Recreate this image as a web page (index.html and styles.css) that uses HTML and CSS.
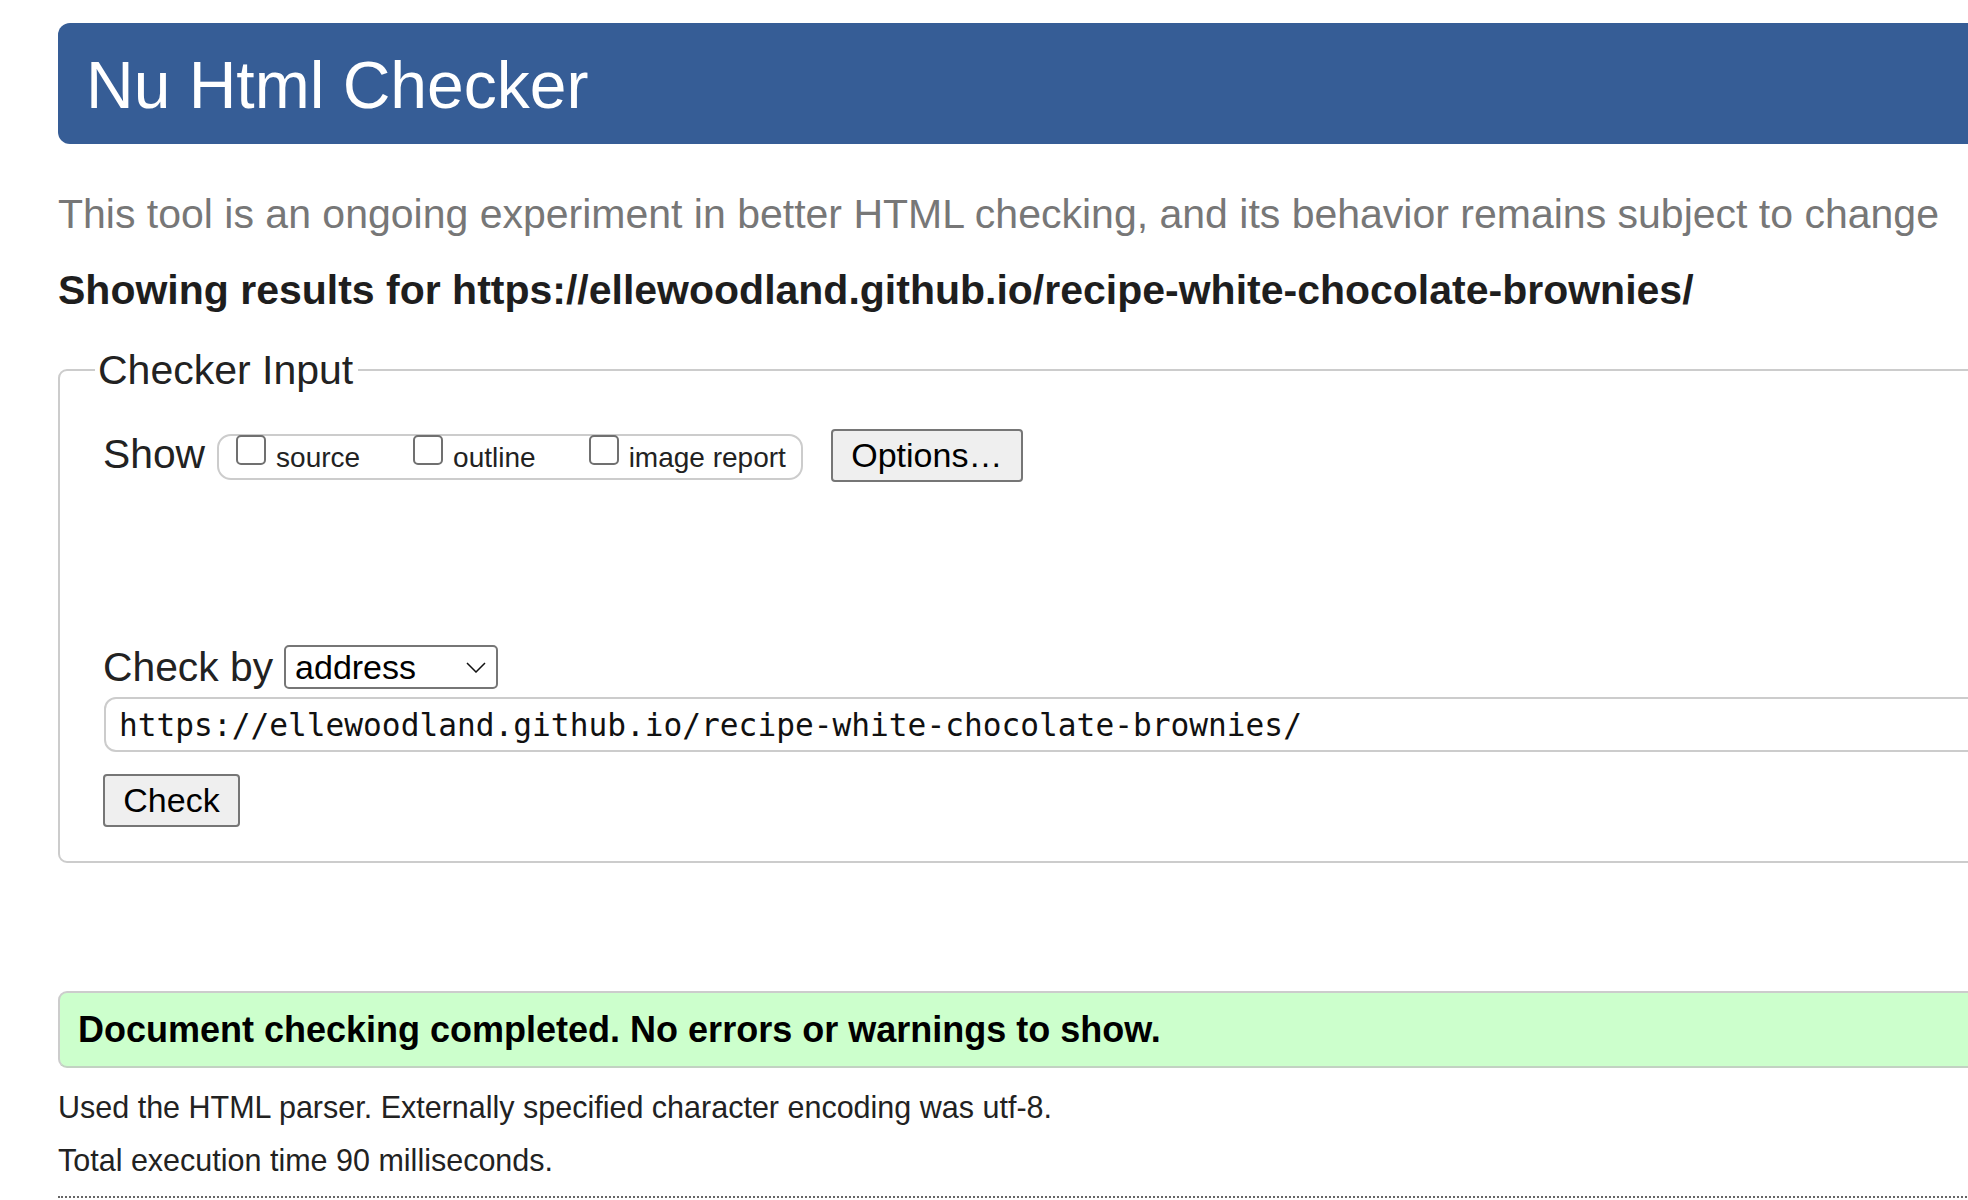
FILE: index.html
```html
<!DOCTYPE html>
<html lang="en">
<head>
<meta charset="utf-8">
<title>Nu Html Checker</title>
<link rel="stylesheet" href="styles.css">
</head>
<body>
<div class="page">
  <header class="banner">
    <h1 class="banner-title">Nu Html Checker</h1>
  </header>
  <p class="lead">This tool is an ongoing experiment in better HTML checking, and its behavior remains subject to change</p>
  <p class="results-for">Showing results for https://ellewoodland.github.io/recipe-white-chocolate-brownies/</p>
  <form class="checker" onsubmit="return false">
    <fieldset class="checker-fieldset">
      <legend class="checker-legend">Checker Input</legend>
      <div class="checker-body">
        <div class="show-row">
          <span class="row-label">Show</span>
          <span class="show-group">
            <label class="opt"><input type="checkbox" class="cb"><span class="opt-text">source</span></label>
            <label class="opt"><input type="checkbox" class="cb"><span class="opt-text">outline</span></label>
            <label class="opt"><input type="checkbox" class="cb"><span class="opt-text">image report</span></label>
          </span>
          <button type="button" class="btn btn-options">Options…</button>
        </div>
        <div class="checkby-row">
          <span class="row-label">Check by</span>
          <span class="select-wrap">
            <select class="select"><option>address</option></select>
            <svg class="select-arrow" width="20" height="11" viewBox="0 0 20 11" aria-hidden="true"><polyline points="1,1 10,10 19,1" fill="none" stroke="#111" stroke-width="1.5"/></svg>
          </span>
        </div>
        <input class="url-input" type="text" value="https://ellewoodland.github.io/recipe-white-chocolate-brownies/">
        <button type="button" class="btn btn-check">Check</button>
      </div>
    </fieldset>
  </form>
  <div class="success">Document checking completed. No errors or warnings to show.</div>
  <p class="meta meta-first">Used the HTML parser. Externally specified character encoding was utf-8.</p>
  <p class="meta">Total execution time 90 milliseconds.</p>
  <hr class="dotted">
</div>
</body>
</html>
```

FILE: styles.css
```css
html, body {
  margin: 0;
  padding: 0;
  overflow: hidden;
  background: #fff;
}

body {
  font-family: "Liberation Sans", Arial, sans-serif;
  font-size: 30.5px;
  color: #222;
}

.page {
  width: 2000px;
  padding: 23px 0 0 58px;
}

.banner {
  background: #365d96;
  border-radius: 12px;
  height: 121px;
  box-sizing: border-box;
  padding: 29px 0 0 28px;
}

.banner-title {
  margin: 0;
  font-size: 66px;
  line-height: 67px;
  font-weight: normal;
  color: #fff;
}

.lead {
  margin: 45px 0 0;
  font-size: 41px;
  line-height: 50px;
  color: #777;
}

.results-for {
  margin: 26px 0 0;
  font-size: 41px;
  line-height: 50px;
  font-weight: bold;
  color: #1e1e1e;
}

.checker {
  margin: 31px 0 0;
}

.checker-fieldset {
  margin: 0;
  min-width: 0;
  border: 2px solid #ccc;
  border-radius: 9px;
  padding: 0 0 34px 35px;
}

.checker-legend {
  padding: 0 5px 0 3px;
  font-size: 41px;
  line-height: 48px;
  color: #222;
}

.checker-body {
  padding-left: 8px;
}

.row-label {
  font-size: 40.8px;
  line-height: 48px;
  color: #222;
}

.show-row {
  display: flex;
  align-items: flex-start;
  margin-top: 35px;
  height: 53px;
}

.show-row .row-label {
  margin-top: 1px;
}

.show-group {
  display: flex;
  align-items: flex-start;
  gap: 53px;
  box-sizing: border-box;
  height: 46px;
  margin: 5px 0 0 12px;
  padding: 0 15px 0 17px;
  border: 2px solid #ccc;
  border-radius: 14px;
}

.opt {
  display: flex;
  align-items: flex-start;
  gap: 10px;
}

.cb {
  -webkit-appearance: none;
  appearance: none;
  box-sizing: border-box;
  width: 30px;
  height: 30px;
  margin: -1px 0 0 0;
  border: 2px solid #707070;
  border-radius: 5px;
  background: #fff;
}

.opt-text {
  font-size: 28px;
  line-height: 34px;
  padding-top: 5px;
  color: #222;
}

.btn {
  box-sizing: border-box;
  font-family: "Liberation Sans", Arial, sans-serif;
  font-size: 34px;
  color: #000;
  background: #efefef;
  border: 2px solid #767676;
  border-radius: 4px;
  padding: 0;
}

.btn-options {
  width: 192px;
  height: 53px;
  margin-left: 28px;
}

.checkby-row {
  display: flex;
  align-items: center;
  height: 44px;
  margin-top: 163px;
}

.select-wrap {
  position: relative;
  display: block;
  margin-left: 11px;
}

.select {
  -webkit-appearance: none;
  appearance: none;
  display: block;
  box-sizing: border-box;
  width: 214px;
  height: 44px;
  padding: 0 0 0 9px;
  border: 2px solid #767676;
  border-radius: 5px;
  background: #fff;
  font-family: "Liberation Sans", Arial, sans-serif;
  font-size: 34px;
  color: #000;
}

.select-arrow {
  position: absolute;
  right: 12px;
  top: 17px;
  pointer-events: none;
}

.url-input {
  display: block;
  box-sizing: border-box;
  width: 100%;
  height: 55px;
  margin: 8px 0 0 1px;
  padding: 0 13px;
  border: 2px solid #ccc;
  border-radius: 12px;
  font-family: "DejaVu Sans Mono", "Liberation Mono", monospace;
  font-size: 31.2px;
  color: #111;
  background: #fff;
}

.btn-check {
  display: block;
  width: 137px;
  height: 53px;
  margin-top: 22px;
}

.success {
  margin-top: 128px;
  box-sizing: border-box;
  height: 77px;
  padding-left: 18px;
  background: #ccffcc;
  border: 2px solid #ccc;
  border-bottom-color: #c2d2c2;
  border-radius: 9px;
  font-size: 36px;
  line-height: 73px;
  font-weight: bold;
  color: #000;
}

.meta {
  margin: 0;
  font-size: 30.5px;
  line-height: 53px;
  color: #222;
}

.meta-first {
  margin-top: 13px;
}

.dotted {
  margin: 9px 0 0;
  height: 0;
  border: 0;
  border-top: 2px dotted #666;
}
```
